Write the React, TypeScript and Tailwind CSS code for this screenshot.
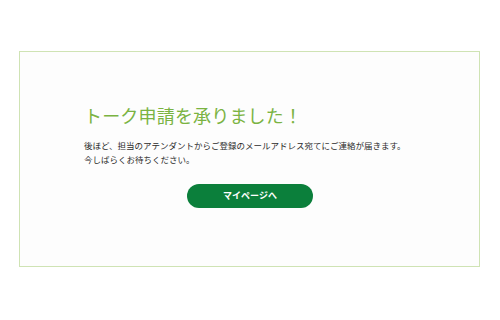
import React from "react";

export default function App() {
  return (
    <div className="w-[500px] h-[320px] bg-white" style={{ fontFamily: '"Noto Sans CJK JP", "Noto Sans", sans-serif' }}>
      <div className="h-[51px]" />
      <div className="ml-[19px] w-[461px] h-[216px] border border-[#cfe3b4] bg-[#fdfdfd] pl-[64px] pt-[50px]">
        <h1 className="text-[18px] leading-[26px] text-[#7ab342] tracking-[0.01em]">トーク申請を承りました！</h1>
        <p className="mt-[10px] text-[8.5px] leading-[14px] text-[#2b2b2b]">
          後ほど、担当のアテンダントからご登録のメールアドレス宛てにご連絡が届きます。
          <br />
          今しばらくお待ちください。
        </p>
        <div className="mt-[18px] ml-[103px] w-[126px] h-[24px] rounded-full bg-[#0b7f3b] flex items-center justify-center">
          <span className="text-white text-[9px] font-bold">マイページへ</span>
        </div>
      </div>
    </div>
  );
}
